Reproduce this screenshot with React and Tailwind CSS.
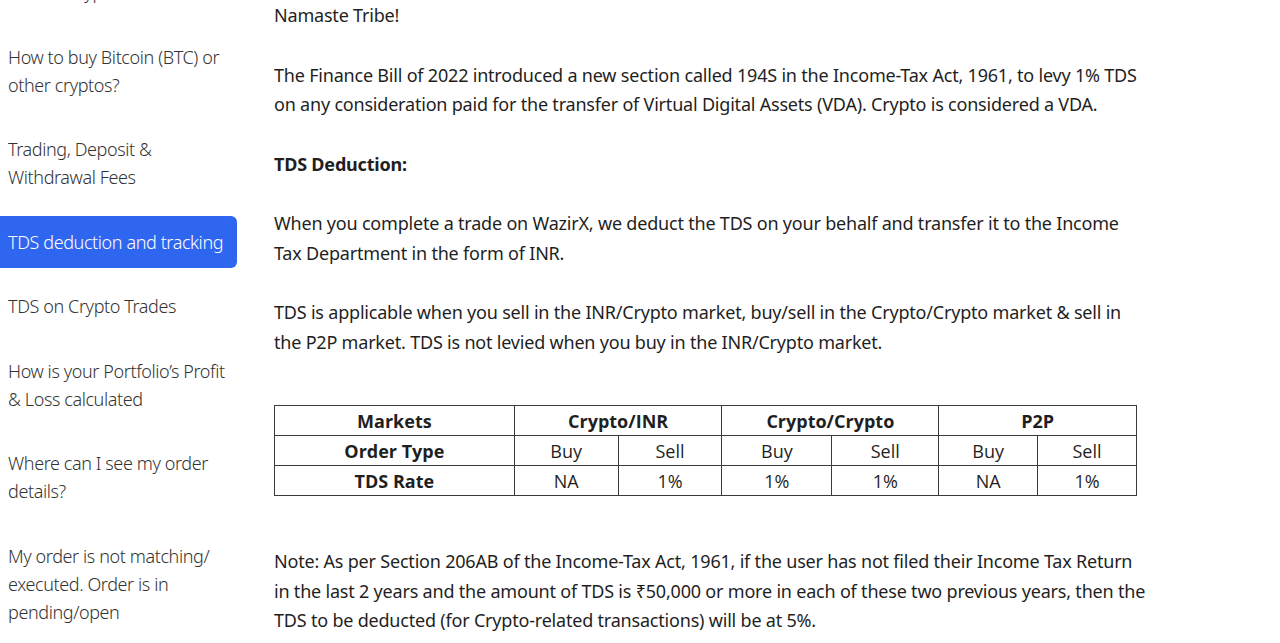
export default function App() {
  const items = [
    { t: "What is crypto?", active: false },
    { t: "How to buy Bitcoin (BTC) or other cryptos?", active: false },
    { t: "Trading, Deposit & Withdrawal Fees", active: false },
    { t: "TDS deduction and tracking", active: true },
    { t: "TDS on Crypto Trades", active: false },
    { t: "How is your Portfolio’s Profit & Loss calculated", active: false },
    { t: "Where can I see my order details?", active: false },
    { t: "My order is not matching/ executed. Order is in pending/open", active: false },
  ];
  const td = "border border-[#3a3a3a] text-center font-normal py-0 h-[30px]";
  const th = "border border-[#3a3a3a] text-center font-bold py-0 h-[30px]";
  return (
    <div className="w-[1280px] h-[643px] overflow-hidden bg-white text-[#1f1f1f] flex" style={{ fontFamily: '"Noto Sans", sans-serif' }}>
      <div className="w-[237px] shrink-0 flex flex-col gap-[12.5px] mt-[-34px]">
        {items.map((it, i) => (
          <div
            key={i}
            className={
              "px-2 py-3 text-[18px] leading-[28px] font-light tracking-[-0.4px] " +
              (it.active ? "bg-[#2f66ef] text-white rounded-r-md" : "text-[#333]")
            }
          >
            {it.t}
          </div>
        ))}
      </div>
      <div className="ml-[37px] w-[866px] text-[18px] leading-[29.5px] tracking-[-0.2px] pt-[1px] whitespace-nowrap">
        <p>Namaste Tribe!</p>
        <p className="mt-[30px]">
          The Finance Bill of 2022 introduced a new section called 194S in the Income-Tax Act, 1961, to levy 1% TDS
          <br />
          on any consideration paid for the transfer of Virtual Digital Assets (VDA). Crypto is considered a VDA.
        </p>
        <p className="mt-[30px] font-bold">TDS Deduction:</p>
        <p className="mt-[30px]">
          When you complete a trade on WazirX, we deduct the TDS on your behalf and transfer it to the Income
          <br />
          Tax Department in the form of INR.
        </p>
        <p className="mt-[30px]">
          TDS is applicable when you sell in the INR/Crypto market, buy/sell in the Crypto/Crypto market &amp; sell in
          <br />
          the P2P market. TDS is not levied when you buy in the INR/Crypto market.
        </p>
        <table className="mt-[48px] border-collapse w-[863px] text-[18px] leading-[24px] tracking-normal" style={{ fontFamily: '"Open Sans", sans-serif' }}>
          <colgroup>
            <col className="w-[240px]" />
            <col className="w-[104px]" />
            <col className="w-[104px]" />
            <col className="w-[110px]" />
            <col className="w-[107px]" />
            <col className="w-[99px]" />
            <col className="w-[99px]" />
          </colgroup>
          <tbody>
            <tr>
              <th className={th}>Markets</th>
              <th className={th} colSpan={2}>Crypto/INR</th>
              <th className={th} colSpan={2}>Crypto/Crypto</th>
              <th className={th} colSpan={2}>P2P</th>
            </tr>
            <tr>
              <th className={th}>Order Type</th>
              <td className={td}>Buy</td>
              <td className={td}>Sell</td>
              <td className={td}>Buy</td>
              <td className={td}>Sell</td>
              <td className={td}>Buy</td>
              <td className={td}>Sell</td>
            </tr>
            <tr>
              <th className={th}>TDS Rate</th>
              <td className={td}>NA</td>
              <td className={td}>1%</td>
              <td className={td}>1%</td>
              <td className={td}>1%</td>
              <td className={td}>NA</td>
              <td className={td}>1%</td>
            </tr>
          </tbody>
        </table>
        <p className="mt-[51px]">
          Note: As per Section 206AB of the Income-Tax Act, 1961, if the user has not filed their Income Tax Return
          <br />
          in the last 2 years and the amount of TDS is ₹50,000 or more in each of these two previous years, then the
          <br />
          TDS to be deducted (for Crypto-related transactions) will be at 5%.
        </p>
      </div>
    </div>
  );
}
